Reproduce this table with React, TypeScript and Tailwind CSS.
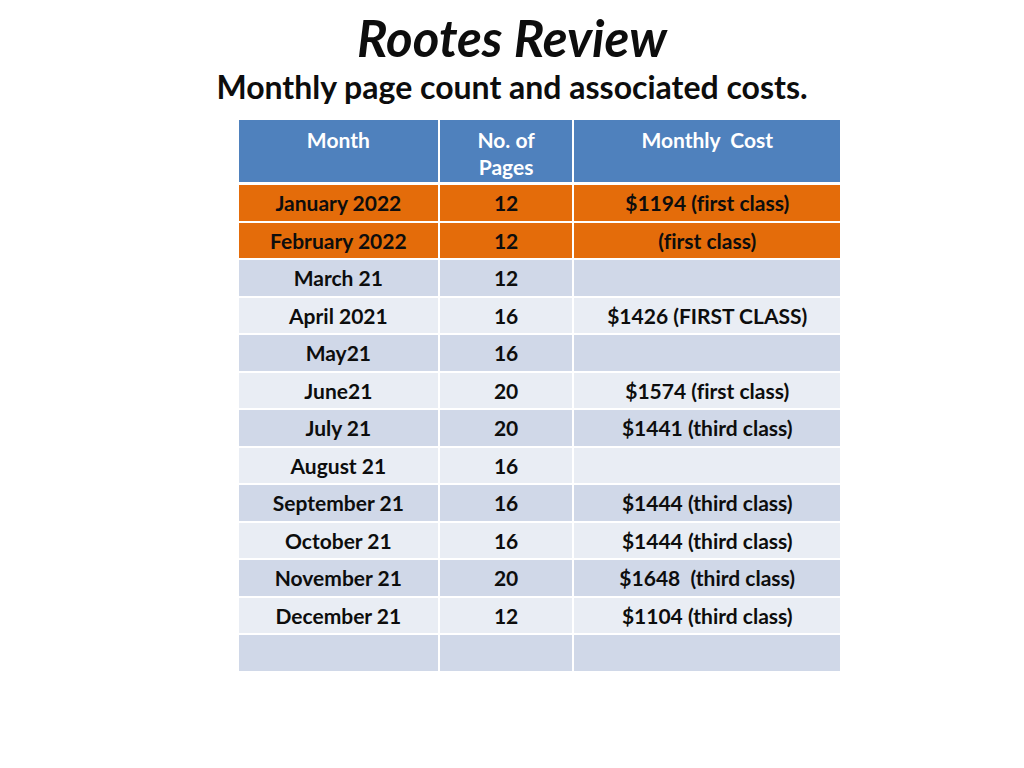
const rows: { month: string; pages: string; cost: string; tone: "orange" | "dark" | "light" }[] = [
  { month: "January 2022", pages: "12", cost: "$1194 (first class)", tone: "orange" },
  { month: "February 2022", pages: "12", cost: "(first class)", tone: "orange" },
  { month: "March 21", pages: "12", cost: "", tone: "dark" },
  { month: "April 2021", pages: "16", cost: "$1426 (FIRST CLASS)", tone: "light" },
  { month: "May21", pages: "16", cost: "", tone: "dark" },
  { month: "June21", pages: "20", cost: "$1574 (first class)", tone: "light" },
  { month: "July 21", pages: "20", cost: "$1441 (third class)", tone: "dark" },
  { month: "August 21", pages: "16", cost: "", tone: "light" },
  { month: "September 21", pages: "16", cost: "$1444 (third class)", tone: "dark" },
  { month: "October 21", pages: "16", cost: "$1444 (third class)", tone: "light" },
  { month: "November 21", pages: "20", cost: "$1648  (third class)", tone: "dark" },
  { month: "December 21", pages: "12", cost: "$1104 (third class)", tone: "light" },
  { month: "", pages: "", cost: "", tone: "dark" },
];

const toneClass = {
  orange: "bg-[#e46c0a]",
  dark: "bg-[#d0d8e8]",
  light: "bg-[#e9edf4]",
};

function Cell({ text, width, tone }: { text: string; width: string; tone: keyof typeof toneClass }) {
  return (
    <div className={`${width} ${toneClass[tone]} flex items-center justify-center whitespace-pre`}>
      {text}
    </div>
  );
}

export default function App() {
  return (
    <div className="h-[768px] w-[1024px] bg-white font-['Lato',sans-serif] text-[#0d0d0d] [font-variant-ligatures:none]">
      <div className="flex flex-col items-center pt-[10px]">
        <h1 className="text-[51px] font-bold italic leading-[56px]">Rootes Review</h1>
        <p className="mt-[2px] text-[32px] font-bold leading-[38px]">Monthly page count and associated costs.</p>
      </div>
      <div className="ml-[239px] mt-[14px] flex w-[601px] flex-col text-[21px] font-bold">
        <div className="flex h-[62px] gap-[2px] bg-white text-white">
          <div className="w-[199px] bg-[#4f81bd] pt-[6px] text-center leading-[27px]">Month</div>
          <div className="w-[133px] bg-[#4f81bd] pt-[6px] text-center leading-[27px]">
            No. of
            <br />
            Pages
          </div>
          <div className="w-[266px] whitespace-pre bg-[#4f81bd] pt-[6px] text-center leading-[27px]">
            Monthly  Cost
          </div>
        </div>
        <div className="mt-[3px] flex flex-col gap-[2px]">
          {rows.map((r, i) => (
            <div key={i} className="flex h-[35.5px] gap-[2px]">
              <Cell text={r.month} width="w-[199px]" tone={r.tone} />
              <Cell text={r.pages} width="w-[133px]" tone={r.tone} />
              <Cell text={r.cost} width="w-[266px]" tone={r.tone} />
            </div>
          ))}
        </div>
      </div>
    </div>
  );
}
